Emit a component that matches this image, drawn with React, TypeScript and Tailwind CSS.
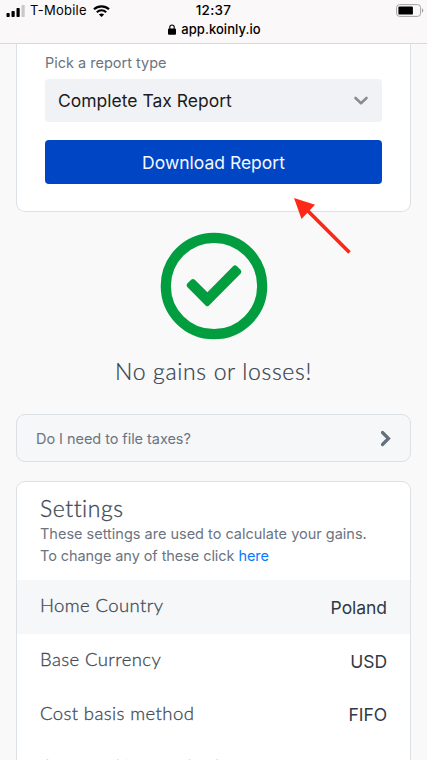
import type { ReactNode } from 'react'

const rows = [
  { label: 'Home Country', value: 'Poland' },
  { label: 'Base Currency', value: 'USD' },
  { label: 'Cost basis method', value: 'FIFO' },
  { label: 'Cost tracking method', value: '' },
]

function StatusBar() {
  return (
    <header className="relative z-10 h-[44px] shrink-0 border-b border-[#d9d9d9] bg-[#faf8f8] text-black">
      <div className="grid h-[21px] grid-cols-3 items-center pl-[6px] pr-[4px]">
        <div className="flex items-center">
          <svg width="20" height="12" viewBox="0 0 20 12">
            <rect x="0.5" y="8" width="3.2" height="4" rx="0.7" />
            <rect x="5.5" y="6" width="3.2" height="6" rx="0.7" />
            <rect x="10.5" y="3" width="3.2" height="9" rx="0.7" />
            <rect x="15.5" y="0" width="3.2" height="12" rx="0.7" fill="#c9c7c7" />
          </svg>
          <span className="ml-[4px] whitespace-nowrap text-[13px] tracking-[0.25px]">T-Mobile</span>
          <svg className="ml-[6px] shrink-0" width="17" height="12" viewBox="0 0 17 12" fill="none" stroke="black">
            <path d="M1 4.2C5.2 0.3 11.8 0.3 16 4.2" strokeWidth="2.2" />
            <path d="M3.8 7.2C6.5 4.7 10.5 4.7 13.2 7.2" strokeWidth="2" />
            <path d="M8.5 12L5.9 9.4C7.3 8.1 9.7 8.1 11.1 9.4Z" fill="black" stroke="none" />
          </svg>
        </div>
        <span className="pr-[2px] text-center text-[13.5px] font-medium tracking-[0.3px]">12:37</span>
        <svg className="-mr-[1px] justify-self-end" width="28" height="13" viewBox="0 0 28 13">
          <rect x="0.6" y="0.6" width="24" height="11.8" rx="3" fill="none" stroke="#a4a2a2" />
          <rect x="2.4" y="2.4" width="14.5" height="8.2" rx="1.2" />
          <path d="M26 4.3C27.8 5 27.8 8 26 8.7Z" fill="#a4a2a2" />
        </svg>
      </div>
      <div className="flex h-[17px] items-center justify-center pl-[2px] text-[13px] font-medium tracking-[0.05px]">
        <svg className="mr-[5px]" width="8" height="11" viewBox="0 0 8 11">
          <rect y="4.5" width="8" height="6.2" rx="1" />
          <path d="M1.8 5V3.2a2.2 2.2 0 0 1 4.4 0V5" fill="none" stroke="black" strokeWidth="1.1" />
        </svg>
        app.koinly.io
      </div>
    </header>
  )
}

function Card({ className, children }: { className: string; children: ReactNode }) {
  return <section className={`mx-4 rounded-[9px] border border-[#dce1e5] ${className}`}>{children}</section>
}

export default function App() {
  return (
    <div className="relative flex h-[760px] w-full flex-col overflow-hidden bg-[#f9f9f9] font-['Inter','Liberation_Sans',sans-serif]">
      <StatusBar />

      <Card className="h-[168px] shrink-0 rounded-t-none border-t-0 bg-white px-[28px] pt-[9px]">
        <p className="text-[14.5px] leading-5 text-[#6b7480]">Pick a report type</p>
        <div className="mt-[6px] flex h-[43px] items-center justify-between rounded-[4px] bg-[#f1f2f6] px-[13px] text-[17.5px] text-[#1b1b1d]">
          <span className="pt-px">Complete Tax Report</span>
          <svg width="16" height="10" viewBox="0 0 16 10" fill="none" stroke="#8b8d91" strokeWidth="2.6" strokeLinecap="round" strokeLinejoin="round">
            <path d="M2.5 2L8 7.2L13.5 2" />
          </svg>
        </div>
        <button className="mt-[18px] h-[44px] w-full rounded-[4px] bg-[#0045c4] pt-[2px] text-[17.5px] text-[#f4f7ff]">Download Report</button>
      </Card>

      {/* pointer towards the download button */}
      <svg className="absolute left-[290px] top-[194px]" width="64" height="64" viewBox="0 0 64 64">
        <path d="M59.5 58.5L15 14" stroke="#ff2816" strokeWidth="3.7" />
        <path d="M4 4L25 10.8L11.5 25Z" fill="#ff2816" />
      </svg>

      <div className="flex h-[202px] shrink-0 flex-col items-center pt-[20px]">
        <svg width="108" height="108" viewBox="0 0 108 108">
          <circle cx="54" cy="54" r="48.2" fill="none" stroke="#019d3f" strokeWidth="10.2" />
          <path d="M27.3 51.5L31.4 47.6Q33.1 46.2 34.8 47.8L47.4 60.3L73.3 34Q75 32.4 76.7 34L80.7 38Q82.2 39.7 80.7 41.4L49 73.4Q47.3 75.2 45.6 73.4L27.3 55Q25.7 53.2 27.3 51.5Z" fill="#019d3f" />
        </svg>
        <p className="mt-[15px] whitespace-nowrap font-['Lato',sans-serif] text-[23px] font-light leading-[32px] tracking-[0.65px] text-[#35404b] [-webkit-text-stroke:0.2px_#35404b]">
          No gains or losses!
        </p>
      </div>

      <Card className="flex h-[48px] shrink-0 items-center justify-between bg-[#f6f7f9] px-[19px]">
        <span className="pt-px text-[14.5px] tracking-[-0.05px] text-[#6b7480]">Do I need to file taxes?</span>
        <svg width="11" height="17" viewBox="0 0 11 17" fill="none" stroke="#65707b" strokeWidth="3.2" strokeLinecap="round">
          <path d="M2.5 2.5L8.5 8.5L2.5 14.5" />
        </svg>
      </Card>

      <Card className="mt-[19px] h-[340px] shrink-0 bg-white">
        <div className="h-[98px] px-[23px] pt-[12px]">
          <h2 className="font-['Lato',sans-serif] text-[23px] font-light leading-[29px] tracking-[0.55px] text-[#3d4854] [-webkit-text-stroke:0.3px_#3d4854]">Settings</h2>
          <p className="text-[14.5px] leading-[21.5px] text-[#6b7480]">
            These settings are used to calculate your gains.
            <br />
            <span className="tracking-[-0.07px]">
              To change any of these click <a className="text-[#087bfa]">here</a>
            </span>
          </p>
        </div>
        {rows.map((row) => (
          <div key={row.label} className="flex h-[53.8px] items-center justify-between px-[23px] nth-[2]:bg-[#f6f7f9]">
            <span className="pb-[2px] font-['Lato',sans-serif] text-[18.5px] font-light tracking-[0.4px] text-[#3f4a55] [-webkit-text-stroke:0.3px_#3f4a55]">{row.label}</span>
            <span className="pt-[2px] text-[17.5px] tracking-[-0.05px] text-[#303944]">{row.value}</span>
          </div>
        ))}
      </Card>
    </div>
  )
}
